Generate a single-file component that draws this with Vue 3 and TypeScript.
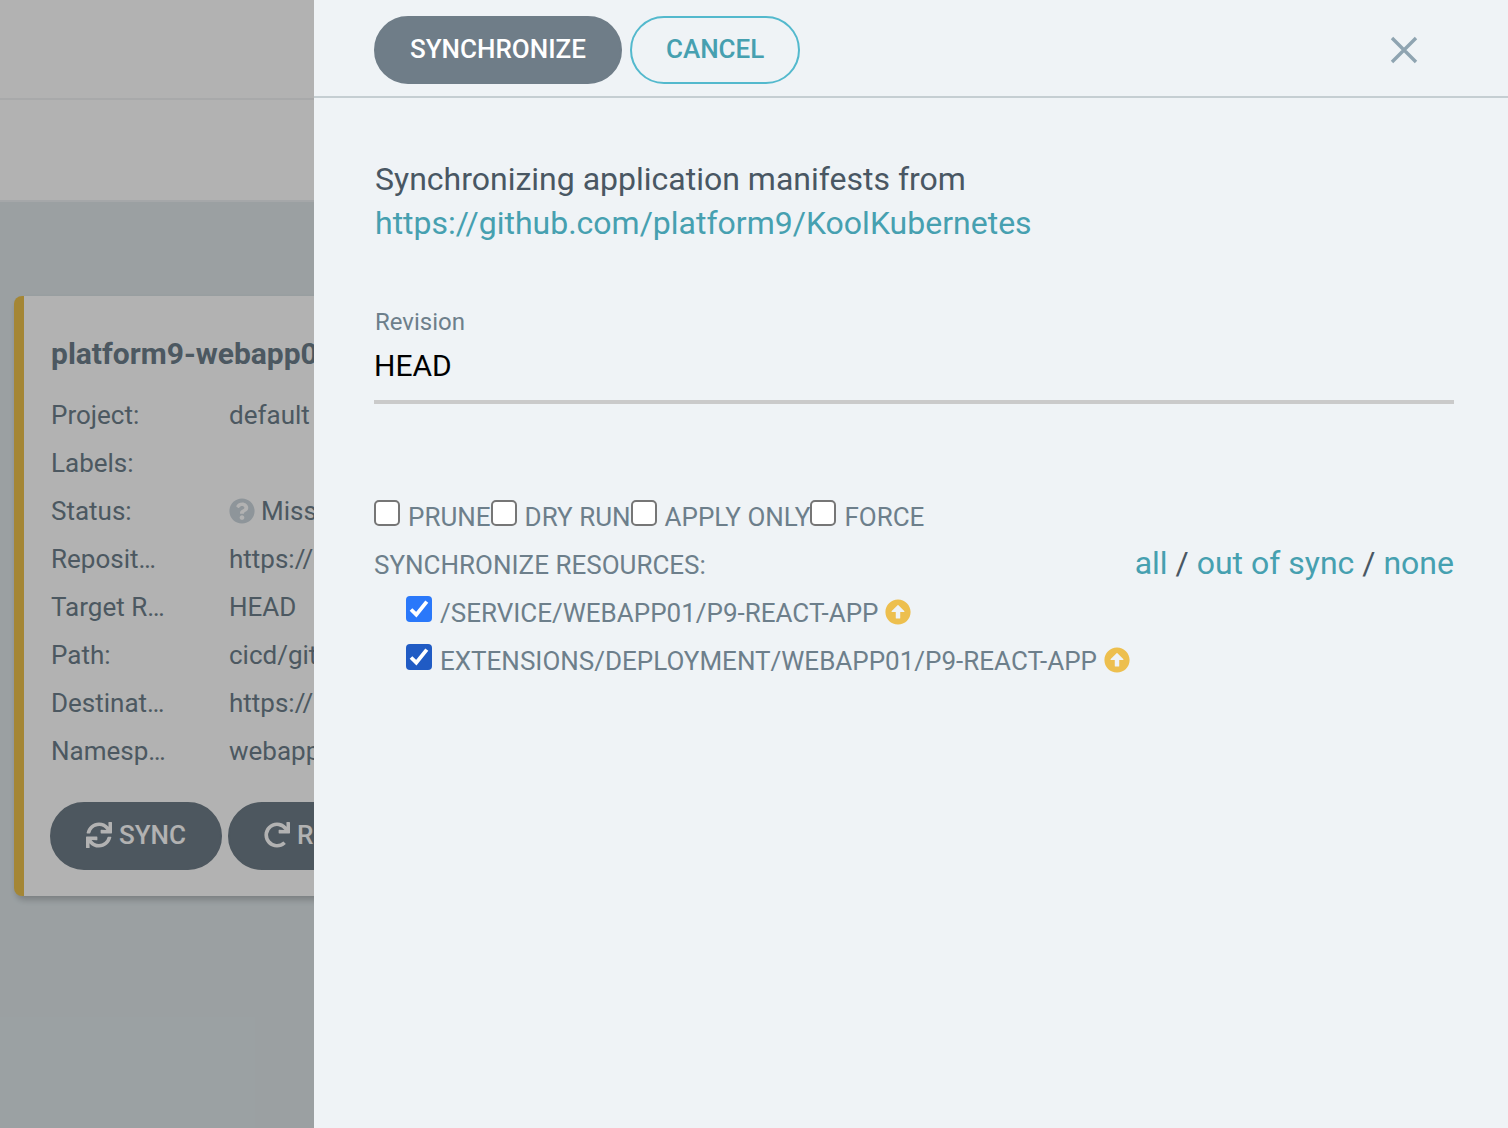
<script setup lang="ts">
import { ref } from 'vue'

interface Field {
  label: string
  value: string
  unknown?: boolean
}

interface Resource {
  id: string
  name: string
  checked: boolean
  hovered?: boolean
}

const fields: Field[] = [
  { label: 'Project:', value: 'default' },
  { label: 'Labels:', value: '' },
  { label: 'Status:', value: 'Miss', unknown: true },
  { label: 'Reposit…', value: 'https://g' },
  { label: 'Target R…', value: 'HEAD' },
  { label: 'Path:', value: 'cicd/git' },
  { label: 'Destinat…', value: 'https://' },
  { label: 'Namesp…', value: 'webapp' },
]

const revision = ref('HEAD')

const options = ref([
  { id: 'prune', label: 'PRUNE', checked: false },
  { id: 'dry-run', label: 'DRY RUN', checked: false },
  { id: 'apply-only', label: 'APPLY ONLY', checked: false },
  { id: 'force', label: 'FORCE', checked: false },
])

const resources = ref<Resource[]>([
  { id: 'service', name: '/SERVICE/WEBAPP01/P9-REACT-APP', checked: true },
  { id: 'deployment', name: 'EXTENSIONS/DEPLOYMENT/WEBAPP01/P9-REACT-APP', checked: true, hovered: true },
])

function selectAll(checked: boolean) {
  resources.value.forEach((r) => (r.checked = checked))
}
</script>

<template>
  <div class="page">
    <div class="backdrop">
      <div class="topbar"></div>
      <div class="topbar"></div>
      <main class="tiles">
        <article class="tile">
          <h2 class="tile-title">platform9-webapp0</h2>
          <dl class="fields">
            <div v-for="f in fields" :key="f.label" class="field">
              <dt>{{ f.label }}</dt>
              <dd>
                <svg v-if="f.unknown" class="status" viewBox="0 0 512 512" aria-hidden="true">
                  <path fill="currentColor" d="M504 256c0 136.997-111.043 248-248 248S8 392.997 8 256C8 119.083 119.043 8 256 8s248 111.083 248 248zM262.655 90c-54.497 0-89.255 22.957-116.549 63.758-3.536 5.286-2.353 12.415 2.715 16.258l34.699 26.31c5.205 3.947 12.621 3.008 16.665-2.122 17.864-22.658 30.113-35.797 57.303-35.797 20.429 0 45.698 13.148 45.698 32.958 0 14.976-12.363 22.667-32.534 33.976C247.128 238.528 216 254.941 216 296v4c0 6.627 5.373 12 12 12h56c6.627 0 12-5.373 12-12v-1.333c0-28.462 83.186-29.647 83.186-106.667 0-58.002-60.165-102-116.531-102zM256 338c-25.365 0-46 20.635-46 46 0 25.364 20.635 46 46 46s46-20.636 46-46c0-25.365-20.635-46-46-46z" />
                </svg>
                {{ f.value }}
              </dd>
            </div>
          </dl>
          <div class="tile-actions">
            <button type="button" class="btn btn-solid">
              <svg class="btn-icon" viewBox="0 0 512 512" fill="currentColor" aria-hidden="true">
                <path d="M440.65 12.57l4 82.77A247.16 247.16 0 0 0 255.83 8C134.73 8 33.91 94.92 12.29 209.82A12 12 0 0 0 24.09 224h49.05a12 12 0 0 0 11.67-9.26 175.91 175.91 0 0 1 317-56.94l-101.46-4.86a12 12 0 0 0-12.57 12v47.41a12 12 0 0 0 12 12H500a12 12 0 0 0 12-12V12a12 12 0 0 0-12-12h-47.37a12 12 0 0 0-11.98 12.57zM255.83 432a175.61 175.61 0 0 1-146-77.8l101.8 4.87a12 12 0 0 0 12.57-12v-47.4a12 12 0 0 0-12-12H12a12 12 0 0 0-12 12V500a12 12 0 0 0 12 12h47.35a12 12 0 0 0 12-12.6l-4.15-82.57A247.17 247.17 0 0 0 255.83 504c121.11 0 221.93-86.92 243.55-201.82a12 12 0 0 0-11.8-14.18h-49.05a12 12 0 0 0-11.67 9.26A175.86 175.86 0 0 1 255.83 432z" />
              </svg>
              SYNC
            </button>
            <button type="button" class="btn btn-solid">
              <svg class="btn-icon" viewBox="0 0 512 512" fill="currentColor" aria-hidden="true">
                <path d="M500.33 0h-47.41a12 12 0 0 0-12 12.57l4 82.76A247.42 247.42 0 0 0 256 8C119.34 8 7.9 119.53 8 256.19 8.1 393.07 119.1 504 256 504a247.1 247.1 0 0 0 166.18-63.91 12 12 0 0 0 .48-17.43l-34-34a12 12 0 0 0-16.38-.55A176 176 0 1 1 402.1 157.8l-101.53-4.87a12 12 0 0 0-12.57 12v47.41a12 12 0 0 0 12 12h200.33a12 12 0 0 0 12-12V12a12 12 0 0 0-12-12z" />
              </svg>
              R
            </button>
          </div>
        </article>
      </main>
      <div class="shade"></div>
    </div>

    <aside class="panel">
      <header class="panel-head">
        <button type="button" class="btn btn-solid">SYNCHRONIZE</button>
        <button type="button" class="btn btn-outline">CANCEL</button>
        <button type="button" class="close" aria-label="Close">
          <svg viewBox="0 0 28 28" width="28" height="28" fill="none" stroke="#8fa4b1" stroke-width="3.4" aria-hidden="true">
            <path d="M2 2l24 24M26 2L2 26" />
          </svg>
        </button>
      </header>

      <form class="panel-body" @submit.prevent>
        <p class="intro">
          Synchronizing application manifests from<br />
          <a href="https://github.com/platform9/KoolKubernetes">https://github.com/platform9/KoolKubernetes</a>
        </p>

        <div class="revision">
          <label for="revision">Revision</label>
          <input id="revision" v-model="revision" type="text" />
        </div>

        <div class="row options">
          <span v-for="o in options" :key="o.id" class="check">
            <input :id="o.id" v-model="o.checked" type="checkbox" />
            <label :for="o.id">{{ o.label }}</label>
          </span>
        </div>

        <div class="row heading">
          <span>SYNCHRONIZE RESOURCES:</span>
          <span class="pick">
            <a href="#" @click.prevent="selectAll(true)">all</a> /
            <a href="#" @click.prevent="selectAll(true)">out of sync</a> /
            <a href="#" @click.prevent="selectAll(false)">none</a>
          </span>
        </div>

        <div v-for="r in resources" :key="r.id" class="row resource">
          <span class="check" :class="{ hovered: r.hovered }">
            <input :id="r.id" v-model="r.checked" type="checkbox" />
            <label :for="r.id">{{ r.name }}</label>
          </span>
          <svg class="outofsync" viewBox="0 0 512 512" role="img" aria-label="Out of sync">
            <path fill="currentColor" d="M8 256C8 119 119 8 256 8s248 111 248 248-111 248-248 248S8 393 8 256zm292 116V256h70.9c10.7 0 16.1-13 8.5-20.5L264.5 121.2c-4.7-4.7-12.2-4.7-16.9 0l-115 114.3c-7.6 7.6-2.2 20.5 8.5 20.5H212v116c0 6.6 5.4 12 12 12h64c6.6 0 12-5.4 12-12z" />
          </svg>
        </div>
      </form>
    </aside>
  </div>
</template>

<style>
body {
  margin: 0;
}
</style>

<style scoped>
.page {
  display: grid;
  grid-template-columns: 314px minmax(0, 1fr);
  min-height: 100vh;
  font-family: Roboto, "Liberation Sans", sans-serif;
  font-size: 26px;
  line-height: 48px;
  color: #6d7f8b;
}

.page * {
  box-sizing: border-box;
}

a {
  color: #46a0b0;
  text-decoration: none;
}

.backdrop {
  position: relative;
  overflow: hidden;
  background: #dee6e9;
}

.shade {
  position: absolute;
  inset: 0;
  background: rgba(0, 0, 0, 0.3);
}

.topbar {
  height: 100px;
  background: #fff;
  border-bottom: 2px solid #f1f3f4;
}

.topbar + .topbar {
  height: 102px;
  border-bottom-color: #edf0f2;
}

.tiles {
  padding: 94px 0 0 14px;
}

.tile {
  width: 600px;
  height: 600px;
  padding: 34px 26px 0;
  background: #fff;
  border-left: 10px solid #ebc14c;
  border-radius: 8px;
  box-shadow: 2px 4px 6px rgba(0, 0, 0, 0.2);
}

.tile-title {
  margin: 0 0 13px;
  font-size: 30px;
  font-weight: 700;
  line-height: 48px;
  white-space: nowrap;
}

.fields {
  margin: 0 0 27px;
}

.tile-title,
.fields {
  padding-left: 1px;
}

.field {
  display: flex;
  height: 48px;
  white-space: nowrap;
}

.field dt {
  flex: none;
  width: 178px;
}

.field dd {
  display: flex;
  align-items: center;
  gap: 6px;
  margin: 0;
}

.status {
  width: 26px;
  height: 26px;
  color: #ccd6dd;
}

.tile-actions {
  display: flex;
  gap: 6px;
}

.btn {
  display: flex;
  flex: none;
  align-items: center;
  gap: 7px;
  height: 68px;
  padding: 0 34px 2px;
  border: 2px solid transparent;
  border-radius: 34px;
  font-family: inherit;
  font-size: 26px;
  font-weight: 500;
  line-height: 32px;
}

.btn-solid {
  background: #6f7d88;
  border-color: #6f7d88;
  color: #fff;
}

.btn-outline {
  background: transparent;
  border-color: #53b9cd;
  color: #46a0b0;
}

.btn-icon {
  width: 26px;
  height: 26px;
}

.panel {
  background: #eff3f6;
}

.panel-head {
  display: flex;
  align-items: center;
  gap: 8px;
  height: 98px;
  padding: 4px 54px 0 60px;
  border-bottom: 2px solid #c5ced2;
}

.close {
  display: flex;
  justify-content: center;
  width: 100px;
  margin-left: auto;
  padding: 0;
  border: 0;
  background: transparent;
}

.panel-body {
  padding: 59px 54px 60px 60px;
}

.intro {
  margin: 0 0 65px;
  font-size: 32px;
  line-height: 44px;
  color: #495763;
}

.revision {
  display: flex;
  flex-direction: column;
  margin-bottom: 89px;
}

.intro,
.revision label {
  padding-left: 1px;
}

.revision label {
  font-size: 24px;
  line-height: 24px;
}

.revision input {
  width: 100%;
  height: 70px;
  padding: 0 0 4px;
  border: 0;
  border-bottom: 4px solid #cacaca;
  background: transparent;
  font-family: inherit;
  font-size: 30px;
  color: #000;
  outline: 0;
}

.row {
  display: flex;
  align-items: center;
  height: 48px;
  white-space: nowrap;
}

.check {
  display: flex;
  align-items: baseline;
  gap: 8px;
}

.check input {
  appearance: none;
  flex: none;
  width: 26px;
  height: 26px;
  margin: 0;
  border: 2px solid #767676;
  border-radius: 5px;
  background: #fff;
}

.check input:checked {
  border: 0;
  border-radius: 4px;
  background: #2a78fa url("data:image/svg+xml,%3Csvg xmlns='http://www.w3.org/2000/svg' viewBox='0 0 26 26'%3E%3Cpath d='M5 13.5l5.3 5.2L20.8 5.6' fill='none' stroke='white' stroke-width='3.8'/%3E%3C/svg%3E") center / 26px 26px;
}

.hovered input:checked {
  background-color: #205bc4;
}

.heading {
  justify-content: space-between;
}

.pick {
  padding-bottom: 4px;
  font-size: 32px;
  line-height: 44px;
  color: #495763;
}

.resource {
  gap: 7px;
  padding-left: 32px;
}

.outofsync {
  width: 26px;
  height: 26px;
  margin-bottom: 2px;
  color: #edbf4e;
}
</style>
